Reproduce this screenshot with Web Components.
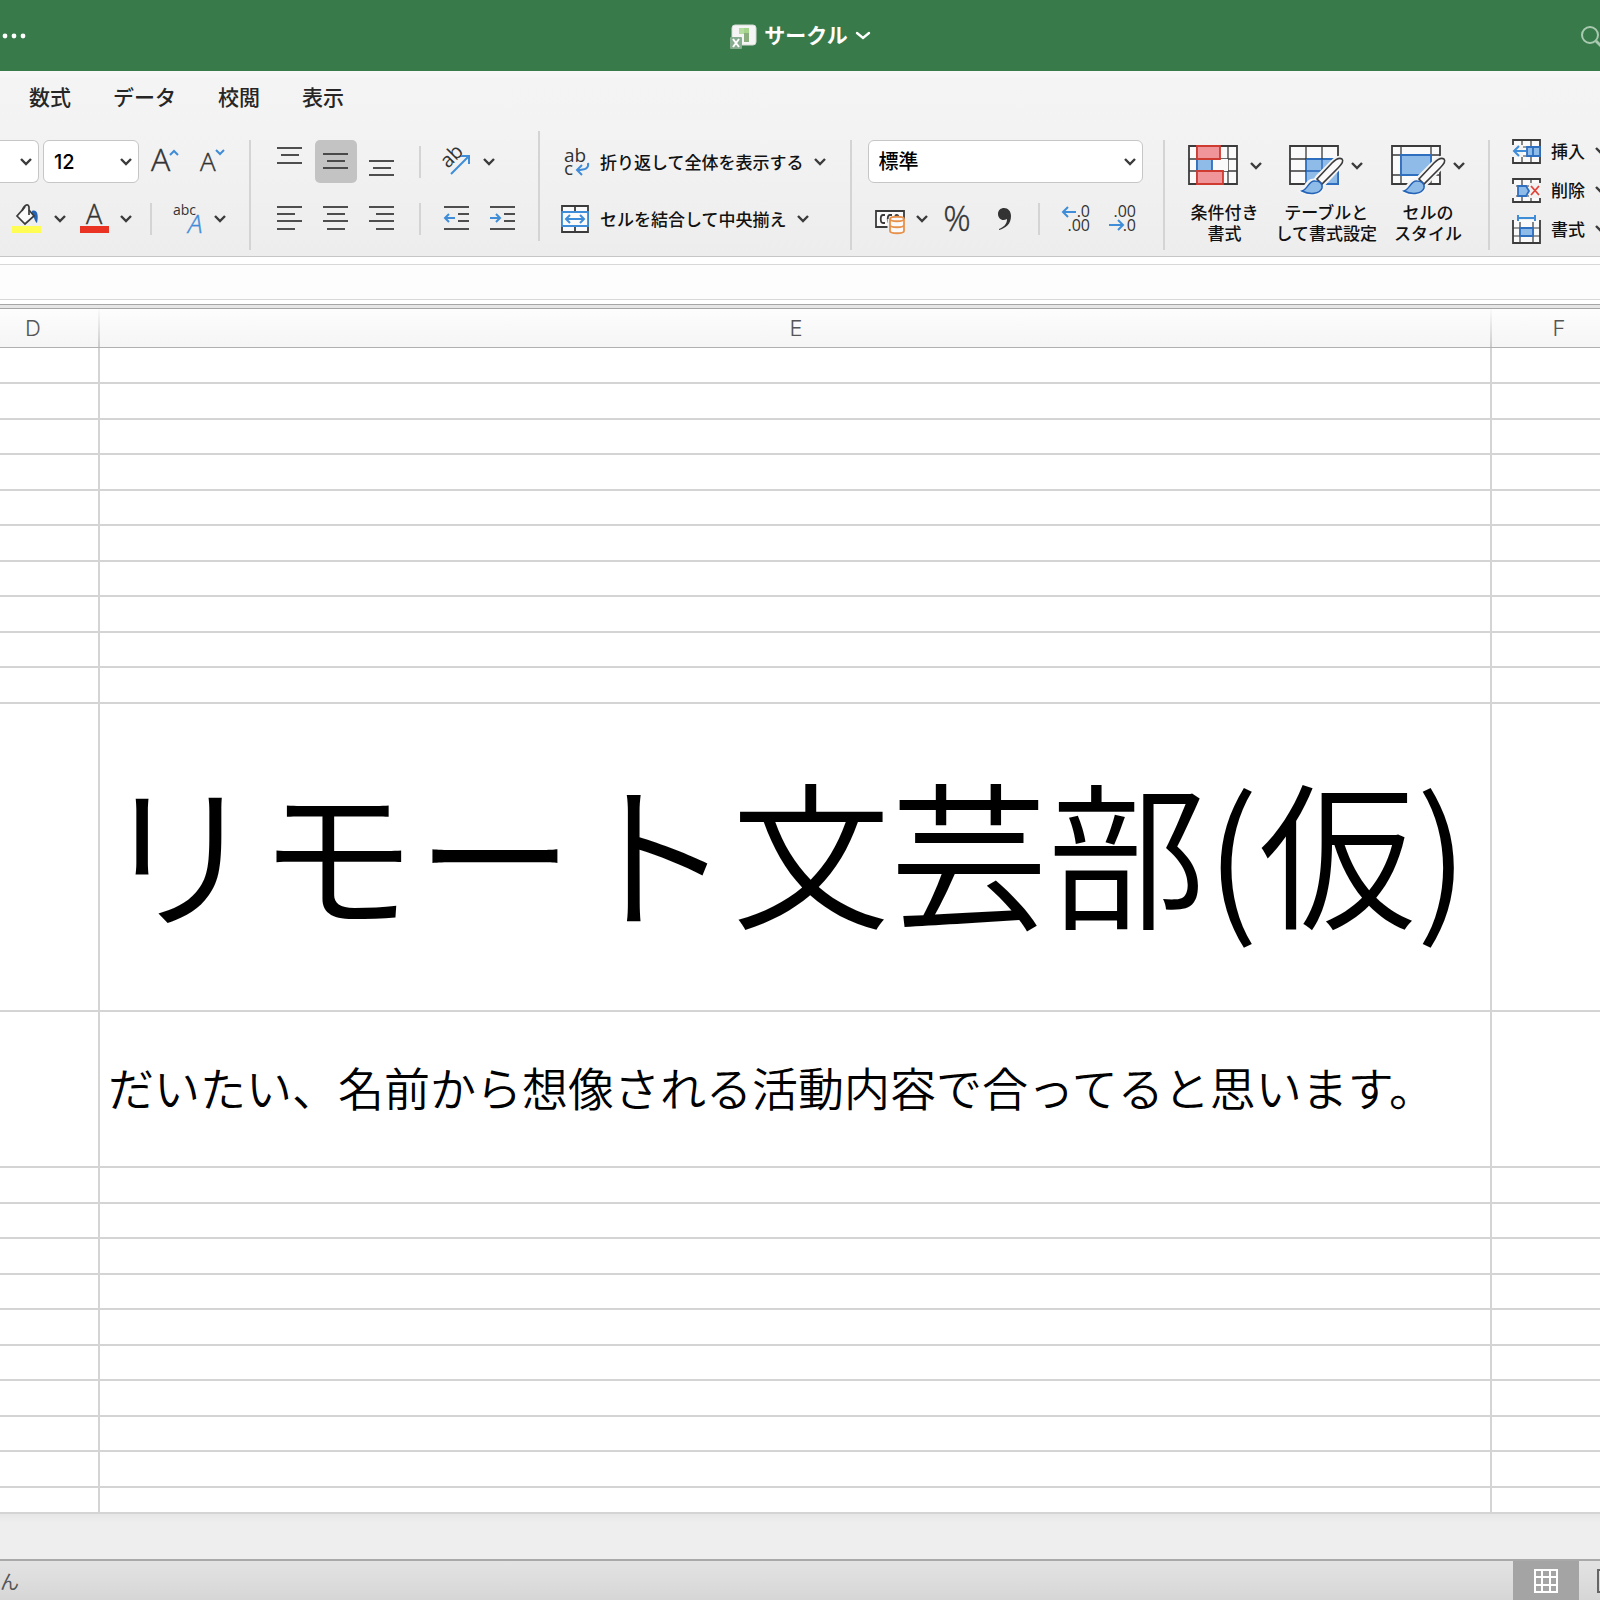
<!DOCTYPE html>
<html lang="ja">
<head>
<meta charset="utf-8">
<title>サークル</title>
<style>
    html, body {
        margin: 0;
        padding: 0;
    }

    body {
        --ink: #3b3b3b;
        --blue: #3f8dd8;
        --line: #d4d4d4;
        display: flex;
        flex-direction: column;
        min-height: 100vh;
        overflow-x: hidden;
        background: #eee;
        color: #222;
        font-family: Inter, "Noto Sans CJK JP", sans-serif;
        font-size: 17px;
    }

    sheet-grid {
        flex: 1;
    }
</style>
</head>
<body>

<title-bar>サークル</title-bar>

<ribbon-tabs>
    <ribbon-tab>数式</ribbon-tab>
    <ribbon-tab>データ</ribbon-tab>
    <ribbon-tab>校閲</ribbon-tab>
    <ribbon-tab>表示</ribbon-tab>
</ribbon-tabs>

<ribbon-bar>
    <ribbon-group style="--start: 0px; --end: 18px">
        <tool-row>
            <combo-box label="フォント" width="39" cut></combo-box>
            <combo-box label="フォント サイズ" width="96" value="12"></combo-box>
            <tool-button icon="grow" label="フォント サイズの拡大"></tool-button>
            <tool-button icon="shrink" label="フォント サイズの縮小"></tool-button>
        </tool-row>
        <tool-row style="--indent: 6px">
            <tool-button icon="fill" label="塗りつぶしの色" drop></tool-button>
            <tool-button icon="color" label="フォントの色" drop></tool-button>
            <thin-line></thin-line>
            <tool-button icon="phonetic" label="ふりがな" drop></tool-button>
        </tool-row>
    </ribbon-group>
    <group-line></group-line>

    <ribbon-group style="--start: 18px; --end: 15px">
        <tool-row>
            <tool-button icon="alignTop" label="上揃え"></tool-button>
            <tool-button icon="alignMiddle" label="上下中央揃え" pressed></tool-button>
            <tool-button icon="alignBottom" label="下揃え"></tool-button>
            <thin-line></thin-line>
            <tool-button icon="rotate" label="方向" drop></tool-button>
        </tool-row>
        <tool-row>
            <tool-button icon="alignLeft" label="左揃え"></tool-button>
            <tool-button icon="alignCenter" label="中央揃え"></tool-button>
            <tool-button icon="alignRight" label="右揃え"></tool-button>
            <thin-line></thin-line>
            <tool-button icon="outdent" label="インデントを減らす"></tool-button>
            <tool-button icon="indent" label="インデントを増やす"></tool-button>
        </tool-row>
    </ribbon-group>
    <group-line raised></group-line>

    <ribbon-group style="--start: 20px; --end: 24px">
        <tool-row>
            <text-button icon="wrap">折り返して全体を表示する</text-button>
        </tool-row>
        <tool-row>
            <text-button icon="merge">セルを結合して中央揃え</text-button>
        </tool-row>
    </ribbon-group>
    <group-line></group-line>

    <ribbon-group style="--start: 16px; --end: 20px">
        <tool-row>
            <combo-box label="表示形式" width="275" value="標準"></combo-box>
        </tool-row>
        <tool-row>
            <tool-button icon="currency" label="通貨" drop></tool-button>
            <tool-button icon="percent" label="パーセント"></tool-button>
            <tool-button icon="comma" label="桁区切り"></tool-button>
            <thin-line></thin-line>
            <tool-button icon="moreDecimals" label="小数点以下の桁数を増やす"></tool-button>
            <tool-button icon="lessDecimals" label="小数点以下の桁数を減らす"></tool-button>
        </tool-row>
    </ribbon-group>
    <group-line></group-line>

    <ribbon-group big style="--start: 23px; --end: 23px">
        <big-button icon="conditional">条件付き<br>書式</big-button>
        <big-button icon="tableStyle">テーブルと<br>して書式設定</big-button>
        <big-button icon="cellStyle">セルの<br>スタイル</big-button>
    </ribbon-group>
    <group-line></group-line>

    <ribbon-group list style="--start: 21px; --end: 0px">
        <text-button icon="insert">挿入</text-button>
        <text-button icon="remove">削除</text-button>
        <text-button icon="format">書式</text-button>
    </ribbon-group>
</ribbon-bar>

<formula-bar></formula-bar>
<sheet-grid></sheet-grid>
<status-bar>ん</status-bar>

<script>
    const line = (x1, x2, y) => `<path d="M${x1} ${y}H${x2}"/>`;

    const brush = `
        <path d="M53 14C50 12 46 15 43 18L29 32C27 34 28 35 26 36C19 35 18 43 13 46C21 50 31 49 33 42C33 40 33 39 35 38L49 23C52 20 55 16 53 14Z" fill="#f8f8f8" stroke="#f4f4f4" stroke-width="5"/>
        <path d="M53 14C50 12 46 15 43 18L28 34L33 39L49 23C52 20 55 16 53 14Z" fill="#fafafa" stroke-width="1.6"/>
        <path d="M26 36C20 35 19 44 13 46C21 50 31 49 33 43C34 38 30 36 26 36Z" fill="#8fbbe9" stroke="#2463b5" stroke-width="1.5"/>`;

    // every glyph: [width, height, markup]
    const ICONS = {
        grow: [42, 43, `<text x="8" y="31" font-size="32">A</text><path d="M27 15L31 11L35 15" class="b"/>`],
        shrink: [42, 43, `<text x="11" y="31" font-size="26">A</text><path d="M27 10L31 14L35 10" class="b"/>`],
        fill: [42, 43, `
            <path d="M6 29H35V36H6Z" fill="#fffd54" stroke="none"/>
            <path d="M26 14C31 12 33 18 31 26C28 24 29 19 25 19Z" fill="#2463b5" stroke="none"/>
            <path d="M19 10L11 19L19 27L28 19L23 13" fill="#fafafa" stroke-width="1.7"/>
            <path d="M16 14C18 8 22 6 23 10V18" stroke-width="1.7"/>`],
        color: [42, 43, `<text x="14" y="27" font-size="27">A</text><path d="M8 29H37V36H8Z" fill="#ea3323" stroke="none"/>`],
        phonetic: [42, 43, `<text x="7" y="18" font-size="14" class="r">abc</text><text x="22" y="36" font-size="26" font-style="italic" class="bt">A</text>`],
        alignTop: [42, 43, line(8, 33, 8) + line(12, 30, 15) + line(8, 33, 23)],
        alignMiddle: [42, 43, line(8, 33, 14) + line(12, 30, 21) + line(8, 33, 28)],
        alignBottom: [42, 43, line(8, 33, 21) + line(12, 30, 28) + line(8, 33, 35)],
        alignLeft: [42, 43, line(8, 33, 10) + line(8, 26, 17) + line(8, 33, 24) + line(8, 26, 32)],
        alignCenter: [42, 43, line(8, 33, 10) + line(12, 30, 17) + line(8, 33, 24) + line(12, 30, 32)],
        alignRight: [42, 43, line(8, 33, 10) + line(15, 33, 17) + line(8, 33, 24) + line(15, 33, 32)],
        rotate: [42, 43, `<text font-size="20" class="r" transform="translate(13 29) rotate(-45)">ab</text><path d="M16 34L34 16M26 16H34V24" class="b"/>`],
        outdent: [42, 43, line(9, 34, 10) + line(23, 34, 17) + line(23, 34, 24) + line(9, 34, 32) + `<path d="M20 21H10M14 17L10 21L14 25" class="b"/>`],
        indent: [42, 43, line(9, 34, 10) + line(23, 34, 17) + line(23, 34, 24) + line(9, 34, 32) + `<path d="M9 21H19M15 17L19 21L15 25" class="b"/>`],
        wrap: [30, 28, `<text font-size="19" class="r"><tspan x="4" y="14">ab</tspan><tspan x="4" y="27">c</tspan></text><path d="M28 15C29 20 26 22 17 22M22 17L17 22L22 27" class="b"/>`],
        merge: [30, 28, `
            <path d="M2 1H28V27H2ZM15 1V7M15 21V27" fill="#fafafa"/>
            <path d="M2 7H28V21H2Z" fill="#fafafa" class="s"/>
            <path d="M6 14H24M10 10L6 14L10 18M20 10L24 14L20 18" class="b"/>`],
        currency: [42, 43, `
            <path d="M8 14H36V30H8Z" fill="#fafafa"/>
            <path d="M17 18H15C12 18 12 26 15 26H17M24 18H22C19 18 19 26 22 26M27 19C29 17 31 18 31 22" />
            <path d="M22 22V34C22 37 36 37 36 34V22" fill="#fafafa" stroke="#efefef" stroke-width="5"/>
            <path d="M22 22V34C22 37 36 37 36 34V22C36 19 22 19 22 22C22 25 36 25 36 22M22 28C22 31 36 31 36 28" fill="#fafafa" stroke="#e8914a"/>`],
        percent: [42, 43, `<text x="23" y="34" font-size="34" text-anchor="middle">%</text>`],
        comma: [42, 43, `<path d="M24 11C28 11 31 14 31 19C31 27 26 31 19 33V32C24 30 27 27 27 22C22 25 18 21 18 17C18 13 21 11 24 11Z" fill="#333" stroke="none"/>`],
        moreDecimals: [42, 43, `
            <text font-size="16" text-anchor="end" class="r"><tspan x="36" y="20">.0</tspan><tspan x="36" y="34">.00</tspan></text>
            <path d="M22 15H9M14 10L9 15L14 20" class="b"/>`],
        lessDecimals: [42, 43, `
            <text font-size="16" text-anchor="end" class="r"><tspan x="36" y="20">.00</tspan><tspan x="36" y="34">.0</tspan></text>
            <path d="M9 28H23M18 23L23 28L18 33" class="b"/>`],
        conditional: [50, 42, `
            <path d="M1 1H49V39H1Z" fill="#fafafa"/>
            <path d="M1 14H49M1 26H49M9 1V39M40 1V39" stroke-width="1.3"/>
            <path d="M25 14H40V26H25Z" fill="#fafafa" stroke="none"/>
            <path d="M9 14H24V26H9Z" class="f"/>
            <path d="M9 1H32V14H9ZM9 26H35V39H9Z" fill="#f09599" stroke="#cf3a31"/>`],
        tableStyle: [50, 42, `
            <path d="M1 1H49V39H1Z" fill="#fafafa"/>
            <path d="M17 14H49V39H17Z" class="f"/>
            <path d="M1 14H17M1 26H17M17 1V14M33 1V14" stroke-width="1.3"/>
            <path d="M17 26H49M33 14V39" stroke="#2463b5" stroke-width="1.3"/>${brush}`],
        cellStyle: [50, 42, `
            <path d="M1 1H49V39H1Z" fill="#fafafa"/>
            <path d="M1 10H49M1 30H49M10 1V39M40 1V39" stroke-width="1.3"/>
            <path d="M10 10H40V30H10Z" class="f"/>${brush}`],
        insert: [30, 28, `
            <path d="M2 3H29V26H2Z" fill="#fafafa"/>
            <path d="M2 19H29M11 3V26M20 3V26M11 10H29" stroke-width="1.2"/>
            <path d="M0 8H12V20H0Z" fill="#f2f2f2" stroke="none"/>
            <path d="M16 10H29V19H16ZM22 10V19" class="f"/>
            <path d="M15 14H3M8 9L3 14L8 19" class="b"/>`],
        remove: [30, 28, `
            <path d="M2 3H29V26H2Z" fill="#fafafa"/>
            <path d="M2 10H29M2 20H29M11 3V26M20 3V26" stroke-width="1.2"/>
            <path d="M0 8H5V22H0ZM18 7H30V22H18Z" fill="#f2f2f2" stroke="none"/>
            <path d="M7 10H15L18 15L15 20H7Z" class="f"/>
            <path d="M20 10L28 19M28 10L20 19" stroke="#e0443a" stroke-width="1.8"/>`],
        format: [30, 28, `
            <path d="M2 5V28H29V5" fill="#fafafa"/>
            <path d="M2 13H29M2 21H29M9 7V28M22 7V28" stroke-width="1.2"/>
            <path d="M9 13H22V21H9Z" class="f"/>
            <path d="M7 3H24M7 0V6M24 0V6" class="b"/>`],
        chevron: [12, 8, `<path d="M1 1L6 6L11 1" stroke-width="2.4"/>`]
    };

    const icon = name => {
        const [width, height, body] = ICONS[name];
        return `<svg class="icon ${name}" width="${width}" height="${height}" viewBox="0 0 ${width} ${height}" aria-hidden="true">${body}</svg>`;
    };

    const ICON_STYLE = `
        svg { display: block; flex: none; overflow: visible; }
        .icon { fill: none; stroke: var(--ink); stroke-width: 1.8; }
        .icon text { fill: #333; stroke: #333; stroke-width: 0.4; font-family: "Open Sans", sans-serif; font-weight: 300; }
        .icon text.r { stroke: none; font-weight: 400; }
        .icon text.bt { fill: var(--blue); stroke: var(--blue); }
        .icon .b { stroke: var(--blue); stroke-width: 2; }
        .icon .s { stroke: var(--blue); }
        .icon .f { fill: #8fbbe9; stroke: #2f6fc0; }
        button {
            box-sizing: border-box;
            margin: 0;
            padding: 0;
            border: 0;
            border-radius: 5px;
            background: none;
            color: #111;
            font: inherit;
            font-weight: 500;
            white-space: nowrap;
        }
    `;

    class BaseElement extends HTMLElement {
        style_() {
            return '';
        }

        template_() {
            return '<slot></slot>';
        }

        constructor() {
            super();
            this.attachShadow({mode: 'open'});
        }

        connectedCallback() {
            this.shadowRoot.innerHTML = '<style>' + this.style_() + '</style>' + this.template_();
        }
    }

    class TitleBar extends BaseElement {
        style_() {
            return `
                :host {
                    display: grid;
                    grid-template-columns: 1fr auto 1fr;
                    align-items: center;
                    height: 71px;
                    overflow: hidden;
                    background: #387a49;
                    color: #fff;
                }
                button { padding: 0; border: 0; background: none; color: inherit; font: inherit; }
                svg { display: block; overflow: visible; }
                .name { display: flex; align-items: center; gap: 8px; font-size: 21px; font-weight: 700; line-height: 30px; }
                .search { justify-self: end; }
            `;
        }

        template_() {
            return `
                <button aria-label="その他">
                    <svg width="28" height="6" fill="#fff"><circle cx="5" cy="3" r="2.4"/><circle cx="14" cy="3" r="2.4"/><circle cx="23" cy="3" r="2.4"/></svg>
                </button>
                <button class="name">
                    <svg width="26" height="24" viewBox="0 0 26 24" aria-hidden="true">
                        <rect x="2" y="1" width="24" height="20" rx="3" fill="#f5f5f5" stroke="#d5dbd5"/>
                        <path d="M9 4H19V10H9Z" fill="#b5dca0"/>
                        <path d="M14 4H19V18H14Z" fill="#8aae80"/>
                        <path d="M14 4H19V9H14Z" fill="#a5d48c"/>
                        <rect x="0" y="13" width="12" height="12" rx="1" fill="#86ad90"/>
                        <path d="M3 15L9 23M9 15L3 23" stroke="#fff" stroke-width="2"/>
                    </svg>
                    <slot></slot>
                    <svg width="14" height="8" fill="none" stroke="#fff" stroke-width="2.4" stroke-linecap="round"><path d="M1 1L7 6L13 1"/></svg>
                </button>
                <button class="search" aria-label="検索">
                    <svg width="19" height="20" fill="none" stroke="#aac9b1" stroke-width="2"><circle cx="9" cy="9" r="8"/><path d="M15 15L22 22" stroke-width="3"/></svg>
                </button>
            `;
        }
    }

    class RibbonTabs extends BaseElement {
        style_() {
            return `
                :host { background: linear-gradient(#f8f8f8, #f4f4f4 8px, #f3f3f3); }
                nav { display: flex; gap: 42px; padding: 12px 29px 18px; }
            `;
        }

        template_() {
            return '<nav><slot></slot></nav>';
        }
    }

    class RibbonTab extends BaseElement {
        style_() {
            return `
                :host { display: block; }
                a { color: #262626; font-size: 21px; font-weight: 500; line-height: 30px; text-decoration: none; }
            `;
        }

        template_() {
            return '<a href="#"><slot></slot></a>';
        }
    }

    class RibbonBar extends BaseElement {
        style_() {
            return `
                :host {
                    display: flex;
                    align-items: flex-start;
                    overflow: hidden;
                    padding-bottom: 6px;
                    border-bottom: 1px solid #c6c6c6;
                    background: linear-gradient(#f3f3f3, #ededed);
                }
            `;
        }
    }

    class RibbonGroup extends BaseElement {
        style_() {
            return `
                :host {
                    display: flex;
                    flex: none;
                    flex-direction: column;
                    gap: 14px;
                    padding: 9px var(--end) 0 var(--start);
                }
                :host([big]) { flex-direction: row; padding-top: 14px; }
                :host([list]) { gap: 0; padding-top: 0; }
            `;
        }
    }

    class ToolRow extends BaseElement {
        style_() {
            return `
                :host { display: flex; align-items: center; gap: 4px; height: 43px; padding-left: var(--indent, 0px); }
            `;
        }
    }

    class GroupLine extends BaseElement {
        style_() {
            return `
                :host { flex: none; width: 2px; height: 110px; margin-top: 9px; background: var(--line); }
                :host([raised]) { margin-top: 0; }
            `;
        }
    }

    class ThinLine extends BaseElement {
        style_() {
            return `
                :host { width: 2px; height: 32px; margin: 0 10px 0 12px; background: var(--line); }
            `;
        }
    }

    class ToolButton extends BaseElement {
        style_() {
            return ICON_STYLE + `
                :host { display: block; }
                button { display: flex; align-items: center; gap: 6px; height: 43px; }
                :host([drop]) button { padding-right: 2px; }
                :host([pressed]) button { background: #c3c3c3; }
            `;
        }

        template_() {
            return `
                <button aria-label="${this.getAttribute('label')}" aria-pressed="${this.hasAttribute('pressed')}">
                    ${icon(this.getAttribute('icon'))}
                    ${this.hasAttribute('drop') ? icon('chevron') : ''}
                </button>
            `;
        }
    }

    class TextButton extends BaseElement {
        style_() {
            return ICON_STYLE + `
                :host { display: block; }
                button { display: flex; align-items: center; gap: 10px; height: 39px; }
            `;
        }

        template_() {
            return `<button>${icon(this.getAttribute('icon'))}<span><slot></slot></span>${icon('chevron')}</button>`;
        }
    }

    class BigButton extends BaseElement {
        style_() {
            return ICON_STYLE + `
                :host { display: block; }
                button { display: flex; flex-direction: column; align-items: center; gap: 16px; line-height: 21px; }
                .top { display: flex; align-items: center; gap: 12px; }
            `;
        }

        template_() {
            return `
                <button>
                    <span class="top">${icon(this.getAttribute('icon'))}${icon('chevron')}</span>
                    <span><slot></slot></span>
                </button>
            `;
        }
    }

    class ComboBox extends BaseElement {
        style_() {
            return ICON_STYLE + `
                :host { display: grid; align-items: center; }
                select {
                    grid-area: 1 / 1;
                    box-sizing: border-box;
                    width: ${this.getAttribute('width')}px;
                    height: 43px;
                    padding: 0 10px;
                    border: 1px solid #c6c6c6;
                    border-radius: 6px;
                    background: #fff;
                    color: #000;
                    font: inherit;
                    font-size: 20px;
                    font-weight: 500;
                    appearance: none;
                }
                :host([cut]) select { border-left: 0; border-radius: 0 6px 6px 0; }
                svg { grid-area: 1 / 1; justify-self: end; margin-right: 7px; pointer-events: none; }
            `;
        }

        template_() {
            return `
                <select aria-label="${this.getAttribute('label')}"><option>${this.getAttribute('value') || ''}</option></select>
                ${icon('chevron')}
            `;
        }
    }

    class FormulaBar extends BaseElement {
        style_() {
            return `
                :host { display: block; padding-top: 7px; background: #fff; }
                input {
                    display: block;
                    box-sizing: border-box;
                    width: 100%;
                    height: 36px;
                    margin-bottom: 4px;
                    padding: 0 12px;
                    border: solid #d8d8d8;
                    border-width: 1px 0;
                    border-radius: 0;
                    background: #fdfdfd;
                    font: inherit;
                }
                .edge { height: 3px; border: solid #a6a6a6; border-width: 1px 0; background: #e6e6e6; }
            `;
        }

        template_() {
            return '<input type="text" aria-label="数式バー"><div class="edge"></div>';
        }
    }

    class SheetGrid extends BaseElement {
        style_() {
            return `
                :host { display: block; background: linear-gradient(#e6e6e6, #eee 8px) bottom / 100% 45px no-repeat, #eee; }
                table { width: 100%; border-collapse: separate; border-spacing: 0; table-layout: fixed; background: #fff; }
                th, td { box-sizing: border-box; padding: 0; overflow: hidden; }
                th {
                    height: 39px;
                    border-bottom: 1px solid #b0b0b0;
                    background: linear-gradient(#fafafa, #ccc) right / 2px 100% no-repeat, linear-gradient(#fdfdfd, #f5f5f5);
                    color: #555;
                    font-size: 22px;
                    font-weight: 300;
                }
                th:last-child { background: linear-gradient(#fdfdfd, #f5f5f5); }
                .d { width: 100px; }
                .f { width: 108px; }
                th.d { padding-right: 34px; }
                th.f { padding-left: 26px; }
                td { height: 35px; border: solid #d4d4d4; border-width: 0 2px 2px 0; color: #000; line-height: 1; white-space: nowrap; }
                td:last-child { border-right: 0; }
                tr.tall td { height: 36px; }
                tr.title td { height: 308px; padding-bottom: 16px; font-size: 158px; font-weight: 350; font-family: "Noto Sans CJK JP", sans-serif; }
                tr.note td { height: 156px; padding: 0 0 6px 8px; font-size: 46px; font-weight: 350; font-family: "Noto Sans CJK JP", sans-serif; }
                tr.last td { height: 26px; }
            `;
        }

        row(name, text = '') {
            return `<tr class="${name}"><td></td><td>${text}</td><td></td></tr>`;
        }

        // rows alternate between two heights
        blank(count) {
            return Array.from({length: count}, (_, i) => this.row(i % 2 ? 'short' : 'tall')).join('');
        }

        template_() {
            return `
                <table>
                    <thead><tr><th class="d" scope="col">D</th><th scope="col">E</th><th class="f" scope="col">F</th></tr></thead>
                    <tbody>
                        ${this.row('tall')}
                        ${this.blank(9)}
                        ${this.row('title', 'リモート文芸部(仮)')}
                        ${this.row('note', 'だいたい、名前から想像される活動内容で合ってると思います。')}
                        ${this.blank(9)}
                        ${this.row('last')}
                    </tbody>
                </table>
            `;
        }
    }

    class StatusBar extends BaseElement {
        style_() {
            return `
                :host {
                    display: flex;
                    align-items: center;
                    height: 39px;
                    overflow: hidden;
                    border-top: 2px solid #a9a9a9;
                    background: linear-gradient(#e3e3e3, #d6d6d6);
                    color: #555;
                    font-size: 19px;
                }
                span { flex: 1; }
                button { display: grid; place-items: center; width: 66px; height: 39px; padding: 0; border: 0; background: #a4a4a4; }
                button.page { width: 21px; justify-items: end; background: none; }
                svg { display: block; overflow: visible; fill: none; stroke-width: 2; }
            `;
        }

        template_() {
            return `
                <span><slot></slot></span>
                <button aria-label="標準表示"><svg width="24" height="24" stroke="#fff"><path d="M1 1H23V23H1ZM1 8H23M1 16H23M8 1V23M16 1V23"/></svg></button>
                <button class="page" aria-label="ページ レイアウト"><svg width="3" height="24" stroke="#666"><rect x="1" y="1" width="22" height="22"/></svg></button>
            `;
        }
    }

    customElements.define('title-bar', TitleBar);
    customElements.define('ribbon-tabs', RibbonTabs);
    customElements.define('ribbon-tab', RibbonTab);
    customElements.define('ribbon-bar', RibbonBar);
    customElements.define('ribbon-group', RibbonGroup);
    customElements.define('tool-row', ToolRow);
    customElements.define('group-line', GroupLine);
    customElements.define('thin-line', ThinLine);
    customElements.define('tool-button', ToolButton);
    customElements.define('text-button', TextButton);
    customElements.define('big-button', BigButton);
    customElements.define('combo-box', ComboBox);
    customElements.define('formula-bar', FormulaBar);
    customElements.define('sheet-grid', SheetGrid);
    customElements.define('status-bar', StatusBar);
</script>
</body>
</html>
